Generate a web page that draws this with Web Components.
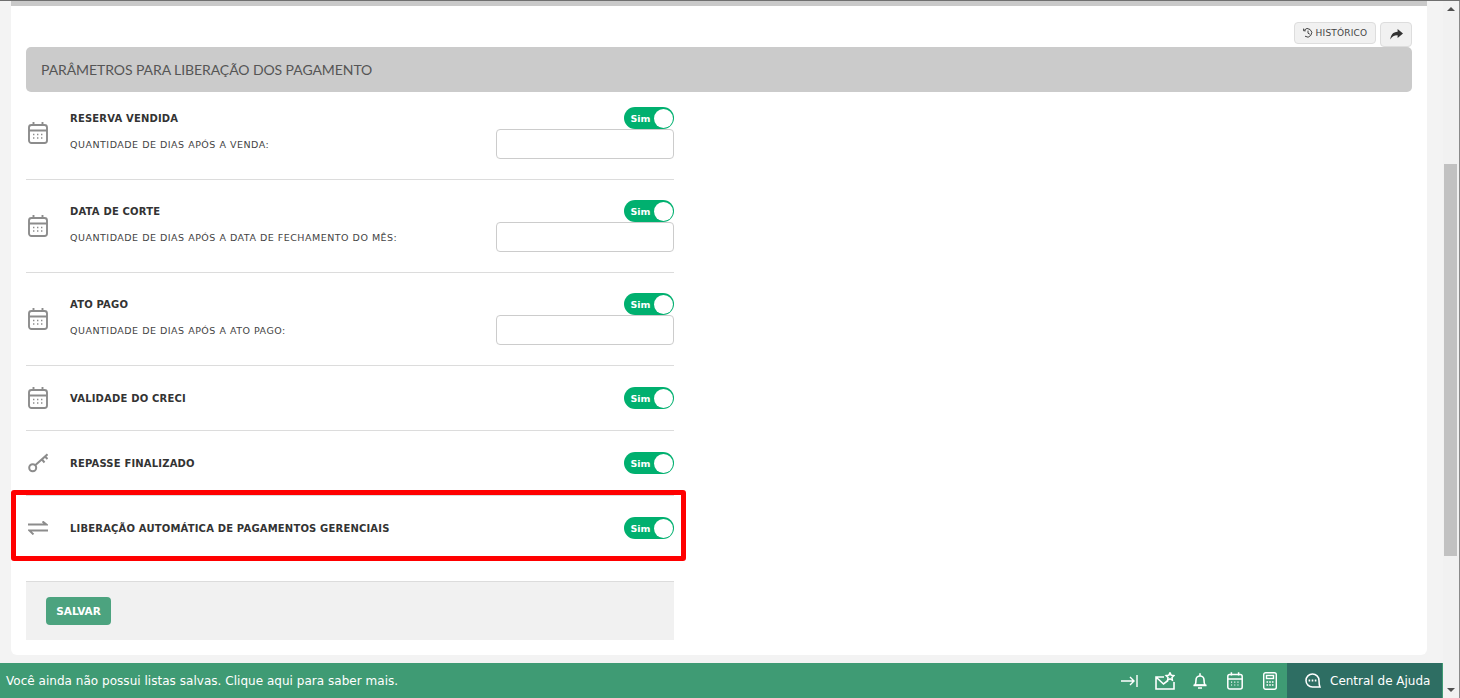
<!DOCTYPE html>
<html lang="pt-BR">
<head>
<meta charset="utf-8">
<title>Parâmetros</title>
<style>
  html, body { margin: 0; height: 100%; overflow: hidden; background: #f3f3f3; }
</style>
</head>
<body>
<app-shell>
  <param-panel></param-panel>
</app-shell>

<script>
// icones usados mais de uma vez
const calendarIcon = (color, w, h) => `
  <svg style="display:block" width="${w}" height="${h}" viewBox="0 0 20 22" fill="none" stroke="${color}" stroke-width="1.9">
    <rect x="1" y="3" width="18" height="18" rx="2.5"/>
    <path d="M1 8.5H19M5.5 0V4M14.5 0V4"/>
    <path d="M5 12.5h2M9 12.5h2M13 12.5h2M5 16h2M9 16h2M13 16h2" stroke-width="1.5" stroke-dasharray="1.4 .6"/>
  </svg>`;

class ToggleSwitch extends HTMLElement {
  constructor() {
    super();
    this.attachShadow({ mode: "open" });
  }
  connectedCallback() {
    this.shadowRoot.innerHTML = `
      <style>
        :host { display: block; width: 50px; height: 22px; }
        .track {
          box-sizing: border-box;
          width: 50px; height: 22px;
          border-radius: 11px;
          background: #00b06f;
          display: flex;
          align-items: center;
          justify-content: space-between;
          padding: 0 1px 0 6.5px;
        }
        span {
          color: #fff;
          font: bold 9.5px "DejaVu Sans", sans-serif;
        }
        i {
          width: 19px; height: 19px;
          border-radius: 50%;
          background: #fff;
        }
      </style>
      <div class="track"><span>Sim</span><i></i></div>
    `;
  }
}
customElements.define("toggle-switch", ToggleSwitch);

class ParamRow extends HTMLElement {
  constructor() {
    super();
    this.attachShadow({ mode: "open" });
  }
  connectedCallback() {
    const sub = this.getAttribute("sub");
    this.shadowRoot.innerHTML = `
      <style>
        :host {
          display: flex;
          align-items: center;
          box-sizing: border-box;
          padding: var(--row-top, 21px) 0 var(--row-bottom, 21px);
          border-bottom: 1px solid #dcdcdc;
          color: #333;
        }
        .icon { width: 44px; padding-left: 2px; box-sizing: border-box; display: flex; }
        ::slotted(*) { display: block; }
        .body { flex: 1; }
        .line { display: flex; justify-content: space-between; align-items: center; }
        .title { font: bold 10px "DejaVu Sans", sans-serif; letter-spacing: .18px; color: #333; }
        .sub { font: 9.5px "DejaVu Sans", sans-serif; letter-spacing: .5px; color: #444; }
        .field {
          box-sizing: border-box;
          width: 178px; height: 30px;
          border: 1px solid #ccc;
          border-radius: 4px;
          background: #fff;
        }
      </style>
      <div class="icon"><slot name="icon"></slot></div>
      <div class="body">
        <div class="line"><span class="title">${this.getAttribute("label")}</span><toggle-switch></toggle-switch></div>
        ${sub ? `<div class="line"><span class="sub">${sub}</span><div class="field"></div></div>` : ""}
      </div>
    `;
  }
}
customElements.define("param-row", ParamRow);

class PanelTools extends HTMLElement {
  constructor() {
    super();
    this.attachShadow({ mode: "open" });
  }
  connectedCallback() {
    this.shadowRoot.innerHTML = `
      <style>
        :host {
          display: flex;
          justify-content: flex-end;
          align-items: flex-start;
          gap: 4px;
          height: 25px;
          position: relative;
          z-index: 1;
        }
        .btn {
          box-sizing: border-box;
          display: flex;
          align-items: center;
          justify-content: center;
          gap: 3px;
          height: 22px;
          background: #f1f1f1;
          border: 1px solid #ddd;
          border-radius: 4px;
          color: #444;
          font: 9px "DejaVu Sans", sans-serif;
          letter-spacing: .2px;
        }
        .hist { width: 82px; }
        .share { width: 32px; height: 25px; }
      </style>
      <div class="btn hist">
        <svg width="10" height="10" viewBox="0 0 10 10" fill="none" stroke="#444" stroke-width="1">
          <path d="M1.2 2.2A4.2 4.2 0 1 1 2 8.2"/>
          <path d="M.6 .6V2.8H2.8M5 2.6V5.2L6.8 6.2"/>
        </svg>
        HISTÓRICO
      </div>
      <div class="btn share">
        <svg width="13" height="11" viewBox="0 0 13 11" fill="#333">
          <path d="M7.6 0L13 4.6 7.6 9V6.3C4.4 6.2 2 7.2 .4 10.4 .6 6 3 2.9 7.6 2.7Z"/>
        </svg>
      </div>
    `;
  }
}
customElements.define("panel-tools", PanelTools);

class ParamPanel extends HTMLElement {
  constructor() {
    super();
    this.attachShadow({ mode: "open" });
  }
  connectedCallback() {
    const cal = calendarIcon("#8c8c8c", 20, 22);
    this.shadowRoot.innerHTML = `
      <style>
        :host {
          display: block;
          position: relative;
          box-sizing: border-box;
          margin-left: 11px;
          width: 1416px;
          height: 654px;
          background: #fff;
          border-radius: 0 0 6px 6px;
          padding: 0 15px;
        }
        .strip {
          height: 5px;
          margin: 0 -15px 16px;
          background: #c9c9c9;
        }
        h2 {
          margin: 0;
          height: 45px;
          background: #cbcbcb;
          border-radius: 5px;
          padding: 0 15px;
          display: flex;
          align-items: center;
          color: #555;
          font: 400 14px Lato, sans-serif;
          letter-spacing: -.08px;
        }
        .rows { width: 648px; }
        .r-first { --row-top: 15px; --row-bottom: 20px; }
        .r-sub { --row-top: 20px; --row-bottom: 20px; }
        .last { border-bottom: none; }
        .actions {
          width: 648px;
          box-sizing: border-box;
          height: 59px;
          margin-top: 21px;
          border-top: 1px solid #dcdcdc;
          background: #f1f1f1;
          padding: 15px 20px;
        }
        button {
          display: block;
          width: 65px; height: 28px;
          border: none;
          border-radius: 4px;
          background: #4ca37f;
          color: #fff;
          font: bold 10.5px "DejaVu Sans", sans-serif;
          padding: 0;
        }
        /* marca vermelha por cima da linha */
        .mark {
          position: absolute;
          left: 0; top: 489px;
          box-sizing: border-box;
          width: 675px; height: 71px;
          border: 5px solid #f00;
          border-radius: 3px;
        }
      </style>
      <div class="strip"></div>
      <panel-tools></panel-tools>
      <h2>PARÂMETROS PARA LIBERAÇÃO DOS PAGAMENTO</h2>
      <div class="rows">
        <param-row class="r-first" label="RESERVA VENDIDA" sub="QUANTIDADE DE DIAS APÓS A VENDA:"><span slot="icon">${cal}</span></param-row>
        <param-row class="r-sub" label="DATA DE CORTE" sub="QUANTIDADE DE DIAS APÓS A DATA DE FECHAMENTO DO MÊS:"><span slot="icon">${cal}</span></param-row>
        <param-row class="r-sub" label="ATO PAGO" sub="QUANTIDADE DE DIAS APÓS A ATO PAGO:"><span slot="icon">${cal}</span></param-row>
        <param-row label="VALIDADE DO CRECI"><span slot="icon">${cal}</span></param-row>
        <param-row label="REPASSE FINALIZADO">
          <svg slot="icon" width="20" height="20" viewBox="0 0 20 20" fill="none" stroke="#8c8c8c" stroke-width="2">
            <circle cx="4.7" cy="14.7" r="3.5"/>
            <path d="M7.2 12.2L19.5 1.3M14 6.5L16.5 9.5M17 3.5L19.5 6"/>
          </svg>
        </param-row>
        <param-row class="last" label="LIBERAÇÃO AUTOMÁTICA DE PAGAMENTOS GERENCIAIS">
          <svg slot="icon" width="20" height="14" viewBox="0 0 20 14" fill="none" stroke="#8c8c8c" stroke-width="2">
            <path d="M0 3.6H18.5L14.5 .4M20 9.6H1.5L5.5 13.4"/>
          </svg>
        </param-row>
      </div>
      <div class="actions"><button>SALVAR</button></div>
      <div class="mark"></div>
    `;
  }
}
customElements.define("param-panel", ParamPanel);

class BottomBar extends HTMLElement {
  constructor() {
    super();
    this.attachShadow({ mode: "open" });
  }
  connectedCallback() {
    this.shadowRoot.innerHTML = `
      <style>
        :host {
          display: flex;
          align-items: center;
          height: 35px;
          background: #3f9b74;
          color: #fff;
          font: 12px "DejaVu Sans", sans-serif;
        }
        .msg { flex: 1; padding-left: 6px; letter-spacing: .03px; }
        .icons { display: flex; align-items: center; }
        .cell { width: 35px; display: flex; justify-content: center; }
        svg { display: block; }
        .help {
          width: 155px; height: 35px;
          margin-right: 1px;
          box-sizing: border-box;
          background: #2e6e63;
          display: flex;
          align-items: center;
          gap: 9px;
          padding-left: 17px;
        }
      </style>
      <div class="msg">Você ainda não possui listas salvas. Clique aqui para saber mais.</div>
      <div class="icons">
        <div class="cell"><svg width="17" height="12" viewBox="0 0 17 12" fill="none" stroke="#fff" stroke-width="1.4">
          <path d="M0 6H13M9 2L13 6 9 10M16 0V12"/>
        </svg></div>
        <div class="cell"><svg width="20" height="18" viewBox="0 0 20 18" fill="none" stroke="#fff" stroke-width="1.6">
          <path d="M9 5H1V17H19V10M1.5 5.5L8.5 12 13 8.5"/>
          <path d="M15 .8L16.2 3.2 18.9 3.6 17 5.5 17.4 8.1 15 6.9 12.6 8.1 13 5.5 11.1 3.6 13.8 3.2Z" stroke-width="1.5"/>
        </svg></div>
        <div class="cell"><svg width="14" height="16" viewBox="0 0 14 16" fill="none" stroke="#fff" stroke-width="1.6">
          <path d="M7 .2V2.4M2 12C3 10.5 3 8.5 3 7A4 4 0 0 1 11 7C11 8.5 11 10.5 12 12Z"/>
          <path d="M.5 12.4H13.5M5 15H9"/>
        </svg></div>
        <div class="cell">${calendarIcon("#fff", 16, 18)}</div>
        <div class="cell"><svg width="14" height="18" viewBox="0 0 14 18" fill="none" stroke="#fff" stroke-width="1.4">
          <rect x=".7" y=".7" width="12.6" height="16.6" rx="2"/>
          <rect x="3.5" y="3.5" width="7" height="3"/>
          <path d="M3.5 10h1.6M6.2 10h1.6M8.9 10h1.6M3.5 13h1.6M6.2 13h1.6M8.9 13h1.6"/>
        </svg></div>
      </div>
      <div class="help">
        <svg width="17" height="15" viewBox="0 0 17 15" fill="none" stroke="#fff" stroke-width="1.5">
          <path d="M16 14H8.5A6.5 6.5 0 1 1 15 7.5C15 9.5 15 12 16 14Z"/>
          <path d="M4.6 7.5h1.6M7.7 7.5h1.6M10.8 7.5h1.6" stroke-width="1.8"/>
        </svg>
        Central de Ajuda
      </div>
    `;
  }
}
customElements.define("bottom-bar", BottomBar);

class PageScrollbar extends HTMLElement {
  constructor() {
    super();
    this.attachShadow({ mode: "open" });
  }
  connectedCallback() {
    this.shadowRoot.innerHTML = `
      <style>
        :host {
          display: flex;
          flex-direction: column;
          box-sizing: border-box;
          width: 17px;
          background: #f1f1f1;
          border-right: 1px solid #8a8a8a;
        }
        .arrow { height: 17px; display: flex; align-items: center; justify-content: center; }
        .arrow.top { height: 16px; }
        .track { flex: 1; display: flex; flex-direction: column; padding: 0 2px 0 1px; }
        .track::before { content: ""; height: 147px; }
        .thumb { height: 392px; background: #c1c1c1; }
        b { width: 0; height: 0; border-left: 4px solid transparent; border-right: 4px solid transparent; }
        .up { border-bottom: 4px solid #505050; }
        .down { border-top: 4px solid #505050; }
      </style>
      <div class="arrow top"><b class="up"></b></div>
      <div class="track"><div class="thumb"></div></div>
      <div class="arrow"><b class="down"></b></div>
    `;
  }
}
customElements.define("page-scrollbar", PageScrollbar);

class AppShell extends HTMLElement {
  constructor() {
    super();
    this.attachShadow({ mode: "open" });
  }
  connectedCallback() {
    this.shadowRoot.innerHTML = `
      <style>
        :host {
          display: flex;
          box-sizing: border-box;
          height: 698px;
          background: #f3f3f3;
          border-top: 1px solid #6f6f6f;
        }
        .main { flex: 1; min-width: 0; display: flex; flex-direction: column; }
        .content { flex: 1; min-height: 0; }
      </style>
      <div class="main">
        <div class="content"><slot></slot></div>
        <bottom-bar></bottom-bar>
      </div>
      <page-scrollbar></page-scrollbar>
    `;
  }
}
customElements.define("app-shell", AppShell);
</script>
</body>
</html>
